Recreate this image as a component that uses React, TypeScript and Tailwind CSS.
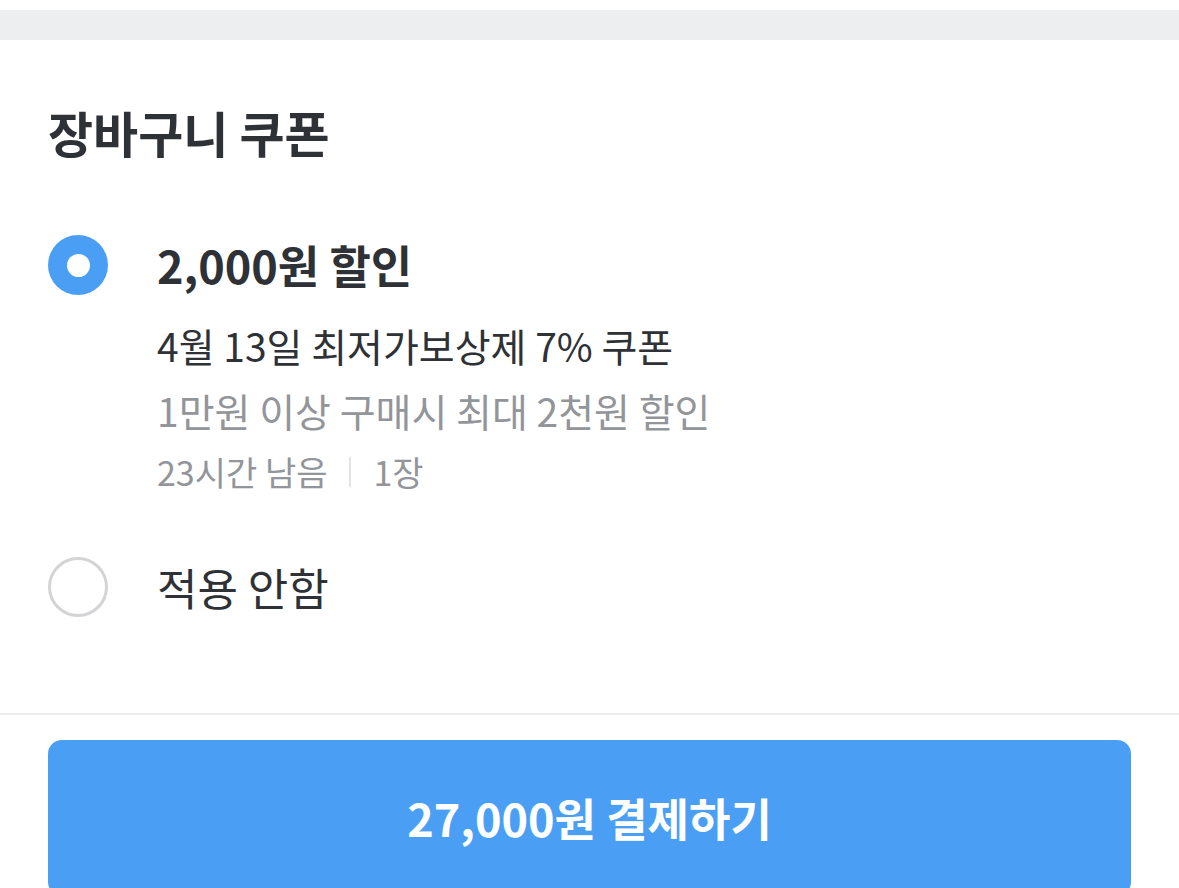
const font = {
  fontFamily: '"Noto Sans CJK KR", "Noto Sans", sans-serif',
};

function Radio({ checked }: { checked: boolean }) {
  return checked ? (
    <div className="w-[60px] h-[60px] rounded-full bg-[#4a9ff5] flex items-center justify-center shrink-0">
      <div className="w-[23px] h-[23px] rounded-full bg-white" />
    </div>
  ) : (
    <div className="w-[60px] h-[60px] rounded-full border-[3px] border-[#d4d4d6] shrink-0" />
  );
}

export default function App() {
  return (
    <div className="w-[1179px] h-[888px] overflow-hidden bg-white" style={font}>
      <div className="h-[10px] bg-white" />
      <div className="h-[30px] bg-[#eceef0]" />

      <div className="px-[48px] pt-[62px]">
        <h2 className="text-[49px] leading-[60px] font-bold text-[#2e3135]">
          장바구니 쿠폰
        </h2>

        <div className="mt-[73px] flex items-start gap-[49px]">
          <Radio checked />
          <div className="flex flex-col">
            <div className="text-[45px] leading-[60px] font-bold text-[#2e3135]">
              2,000원 할인
            </div>
            <div className="mt-[25px] text-[39px] leading-[50px] text-[#2e3135]">
              4월 13일 최저가보상제 7% 쿠폰
            </div>
            <div className="mt-[15px] text-[39px] leading-[50px] text-[#929599]">
              1만원 이상 구매시 최대 2천원 할인
            </div>
            <div className="mt-[15px] flex items-center text-[34px] leading-[44px] text-[#929599]">
              <span>23시간 남음</span>
              <span className="mx-[22px] w-[2px] h-[30px] bg-[#e2e3e5]" />
              <span>1장</span>
            </div>
          </div>
        </div>

        <div className="mt-[63px] flex items-center gap-[49px]">
          <Radio checked={false} />
          <div className="text-[44px] leading-[60px] text-[#2e3135]">적용 안함</div>
        </div>
      </div>

      <div className="mt-[96px] h-[2px] bg-[#ececee]" />

      <div className="px-[48px] pt-[25px]">
        <button className="w-full h-[156px] rounded-[14px] bg-[#4a9ff5] text-white text-[45px] font-bold flex items-center justify-center">
          27,000원 결제하기
        </button>
      </div>
    </div>
  );
}
